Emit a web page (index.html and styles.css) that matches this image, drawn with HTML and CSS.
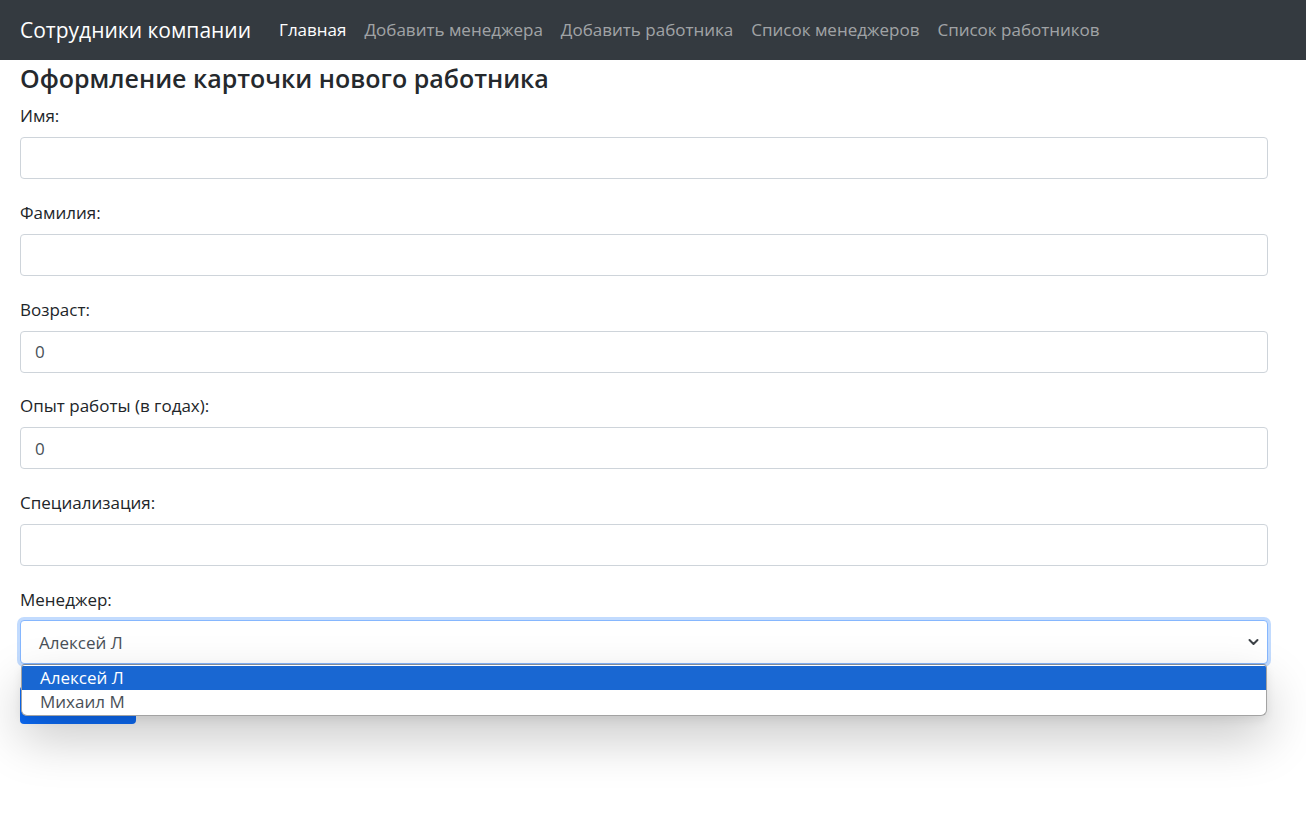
FILE: index.html
```html
<!DOCTYPE html>
<html lang="ru">
<head>
<meta charset="utf-8">
<title>Сотрудники компании</title>
<link rel="stylesheet" href="styles.css">
</head>
<body>
<nav class="navbar">
  <a class="brand" href="#">Сотрудники компании</a>
  <ul class="nav">
    <li><a class="nav-link active" href="#">Главная</a></li>
    <li><a class="nav-link" href="#">Добавить менеджера</a></li>
    <li><a class="nav-link" href="#">Добавить работника</a></li>
    <li><a class="nav-link" href="#">Список менеджеров</a></li>
    <li><a class="nav-link" href="#">Список работников</a></li>
  </ul>
</nav>
<main class="content">
  <h4 class="title">Оформление карточки нового работника</h4>
  <form class="form">
    <div class="group">
      <label class="label">Имя:</label>
      <input class="control" type="text">
    </div>
    <div class="group">
      <label class="label">Фамилия:</label>
      <input class="control" type="text">
    </div>
    <div class="group">
      <label class="label">Возраст:</label>
      <input class="control" type="text" value="0">
    </div>
    <div class="group">
      <label class="label">Опыт работы (в годах):</label>
      <input class="control" type="text" value="0">
    </div>
    <div class="group">
      <label class="label">Специализация:</label>
      <input class="control" type="text">
    </div>
    <div class="group select-group">
      <label class="label">Менеджер:</label>
      <div class="select focused">
        <span class="select-value">Алексей Л</span>
        <svg class="chevron" width="11" height="8" viewBox="0 0 11 8"><path d="M1.5 2l4 4 4-4" fill="none" stroke="#3d4247" stroke-width="2" stroke-linecap="round" stroke-linejoin="round"/></svg>
      </div>
      <ul class="listbox">
        <li class="option selected">Алексей Л</li>
        <li class="option">Михаил М</li>
      </ul>
    </div>
    <button class="btn" type="button">Добавить</button>
  </form>
</main>
</body>
</html>
```

FILE: styles.css
```css
* { box-sizing: border-box; }
html, body { margin: 0; padding: 0; background: #fff; }
body {
  min-height: 100vh;
  font-family: "Open Sans", "Noto Sans", "Liberation Sans", sans-serif;
  font-size: 17px;
  line-height: 24px;
  color: #212529;
}
.navbar {
  display: flex;
  align-items: center;
  height: 60px;
  padding: 0 20px;
  background: #343a40;
}
.brand {
  font-size: 21px;
  line-height: 30px;
  color: #fff;
  text-decoration: none;
  margin-right: 20px;
}
.nav {
  display: flex;
  list-style: none;
  margin: 0;
  padding: 0;
  gap: 2px;
}
.nav-link {
  display: block;
  padding: 8px 8px;
  color: rgba(255,255,255,.55);
  text-decoration: none;
}
.nav-link.active { color: #fff; }
.content {
  padding: 0 38px 0 20px;
}
.title {
  margin: 3px 0 11px;
  font-size: 25px;
  font-weight: 600;
  line-height: 30px;
  color: #25292d;
}
.group {
  margin-bottom: 21.75px;
  position: relative;
}
.label {
  display: block;
  margin-bottom: 9px;
}
.control {
  display: block;
  width: 100%;
  height: 42px;
  padding: 8px 14px;
  font: inherit;
  color: #495057;
  border: 1px solid #ced4da;
  border-radius: 4px;
  background: #fff;
  outline: none;
}
.select {
  display: flex;
  align-items: center;
  height: 44px;
  padding: 2px 8px 0 18px;
  border: 1px solid #86b7fe;
  border-radius: 4px;
  box-shadow: 0 0 0 3px rgba(13,110,253,.25);
  color: #495057;
  background: #fff;
  margin-top: -1px;
}
.select-value { flex: 1; }
.chevron { display: block; margin-top: -2px; }
.listbox {
  position: absolute;
  left: 1px;
  right: 1px;
  top: 100%;
  margin: 0;
  padding: 1px 0 1px;
  list-style: none;
  background: #fff;
  border: 1px solid #a3a3a3;
  border-top-color: #7f8a99;
  border-radius: 4px 4px 6px 6px;
  box-shadow: 0 22px 50px rgba(0,0,0,.22), 0 4px 10px rgba(0,0,0,.08);
  z-index: 10;
  overflow: hidden;
}
.option {
  height: 24px;
  line-height: 24px;
  padding-left: 18px;
  color: #495057;
}
.option.selected {
  background: #1967d2;
  color: #fff;
}
.btn {
  display: block;
  width: 116px;
  height: 38px;
  margin-top: 0;
  border: none;
  border-radius: 4px;
  background: #0d6efd;
  color: #fff;
  font: inherit;
}
```
